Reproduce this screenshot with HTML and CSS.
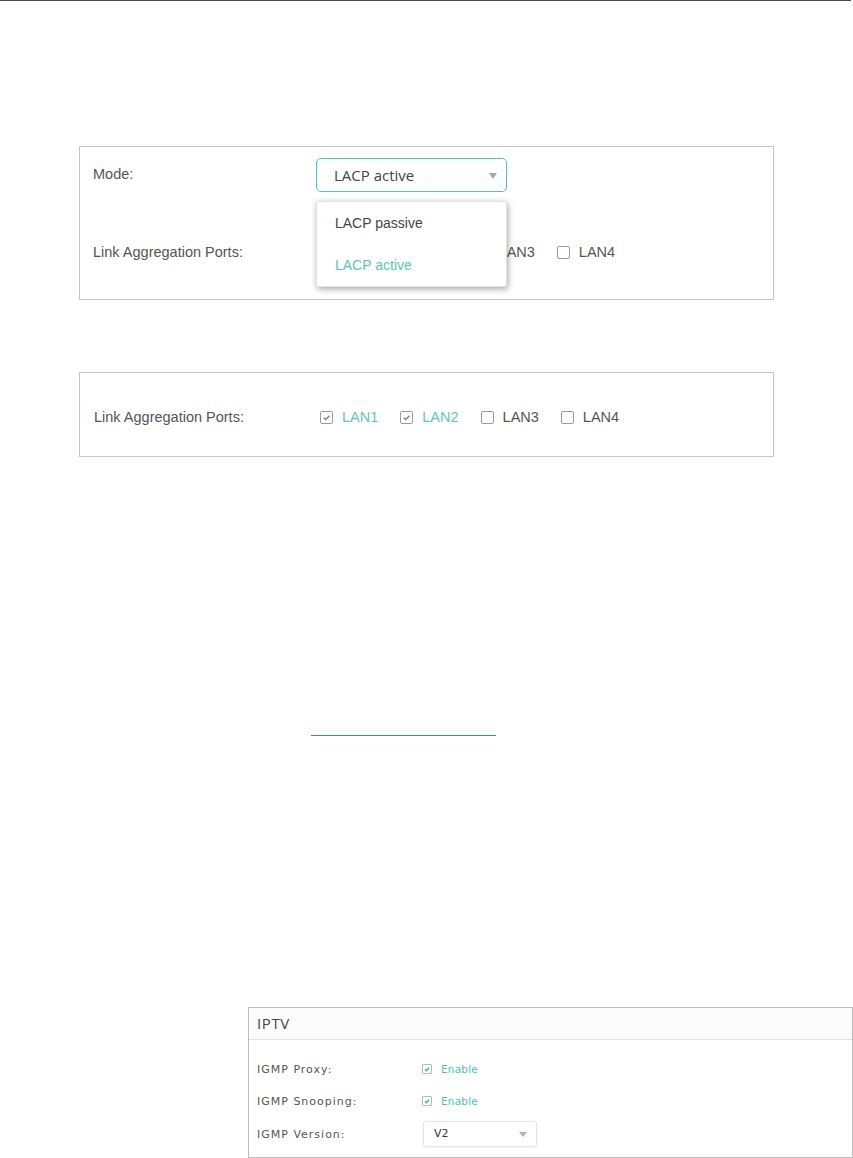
FILE: index.html
```html
<!DOCTYPE html>
<html lang="en">
<head>
    <meta charset="UTF-8">
    <title>Link Aggregation and IPTV</title>
    <link rel="stylesheet" href="styles.css">
</head>
<body>
    <div class="page-rule"></div>

    <!-- Mode select, opened -->
    <section class="shot shot-mode">
        <div class="row row-select">
            <span class="label">Mode:</span>
            <div class="select-wrap">
                <div class="select open">LACP active<span class="caret"></span></div>
                <ul class="menu">
                    <li>LACP passive</li>
                    <li class="selected">LACP active</li>
                </ul>
            </div>
        </div>
        <div class="row">
            <span class="label">Link Aggregation Ports:</span>
            <div class="ports">
                <label class="port covered"><span class="box"></span>LAN1</label>
                <label class="port covered"><span class="box"></span>LAN2</label>
                <label class="port"><span class="box covered"></span>LAN3</label>
                <label class="port"><span class="box"></span>LAN4</label>
            </div>
        </div>
    </section>

    <!-- Ports chosen -->
    <section class="shot shot-ports">
        <div class="row">
            <span class="label">Link Aggregation Ports:</span>
            <div class="ports">
                <label class="port checked"><span class="box"><svg viewBox="0 0 12 12"><path d="M3 6.2l2.1 2.1L9.2 4"/></svg></span>LAN1</label>
                <label class="port checked"><span class="box"><svg viewBox="0 0 12 12"><path d="M3 6.2l2.1 2.1L9.2 4"/></svg></span>LAN2</label>
                <label class="port"><span class="box"></span>LAN3</label>
                <label class="port"><span class="box"></span>LAN4</label>
            </div>
        </div>
    </section>

    <div class="link-rule"></div>

    <!-- IPTV settings -->
    <section class="iptv">
        <div class="iptv-head">IPTV</div>
        <div class="iptv-body">
            <div class="iptv-row">
                <span class="iptv-label">IGMP Proxy:</span>
                <span class="enable"><span class="mini-box"><svg viewBox="0 0 10 10"><path d="M2.5 5.2l1.8 1.8L7.6 3.4"/></svg></span>Enable</span>
            </div>
            <div class="iptv-row">
                <span class="iptv-label">IGMP Snooping:</span>
                <span class="enable"><span class="mini-box"><svg viewBox="0 0 10 10"><path d="M2.5 5.2l1.8 1.8L7.6 3.4"/></svg></span>Enable</span>
            </div>
            <div class="iptv-row iptv-row-select">
                <span class="iptv-label">IGMP Version:</span>
                <div class="mini-select">V2<span class="mini-caret"></span></div>
            </div>
        </div>
    </section>
</body>
</html>
```

FILE: styles.css
```css
* {
    box-sizing: border-box;
}

body {
    margin: 0;
    background-color: #fff;
    font-family: "Liberation Sans", Arial, sans-serif;
    color: #555;
}

.page-rule {
    width: 851px;
    height: 1px;
    background-color: #4a4a4a;
}

/* screenshot panels */
.shot {
    margin-left: 79px;
    width: 695px;
    border: 1px solid #c6c6c6;
    background-color: #fff;
}

.shot-mode {
    margin-top: 145px;
    height: 154px;
    padding: 11px 0 0 13px;
}

.shot-ports {
    margin-top: 72px;
    height: 85px;
    padding: 34px 0 0 14px;
}

.row {
    display: grid;
    grid-template-columns: 223px 1fr;
    align-items: center;
    height: 20px;
}

.shot-ports .row {
    grid-template-columns: 226px 1fr;
}

.row-select {
    height: 34px;
    margin-bottom: 50px;
    align-items: start;
}

.row-select .label {
    margin-top: 8px;
}

.label {
    font-size: 14.5px;
    color: #555;
    white-space: nowrap;
}

.select-wrap {
    position: relative;
    width: 191px;
}

.select {
    position: relative;
    height: 34px;
    border: 1px solid #56c4af;
    border-radius: 5px;
    padding-left: 17px;
    font-family: "Open Sans", sans-serif;
    font-size: 15px;
    line-height: 32px;
    color: #444;
    background-color: #fff;
}

.caret {
    position: absolute;
    right: 9px;
    top: 14px;
    width: 0;
    height: 0;
    border-left: 4.5px solid transparent;
    border-right: 4.5px solid transparent;
    border-top: 6px solid #a8a8a8;
}

.menu {
    position: absolute;
    top: 43px;
    left: 0;
    width: 191px;
    margin: 0;
    padding: 0;
    list-style: none;
    background-color: #fff;
    border: 1px solid #e2e2e2;
    border-radius: 2px;
    box-shadow: 1px 2px 6px rgba(0, 0, 0, 0.35);
    z-index: 2;
}

.menu li {
    height: 42px;
    line-height: 42px;
    padding-left: 18px;
    font-size: 14px;
    color: #444;
}

.menu li.selected {
    color: #5cc6b4;
}

.ports {
    display: flex;
    gap: 22px;
}

.port {
    display: flex;
    align-items: center;
    gap: 9px;
    font-size: 14.5px;
    color: #555;
}

/* hidden under the open menu */
.covered {
    visibility: hidden;
}

.port.checked {
    color: #63c7b6;
}

.box {
    display: flex;
    align-items: center;
    justify-content: center;
    width: 13px;
    height: 13px;
    border: 1px solid #9a9a9a;
    border-radius: 2px;
    background-color: #fff;
}

.box svg {
    width: 11px;
    height: 11px;
    fill: none;
    stroke: #5a8f86;
    stroke-width: 1.5;
}

.link-rule {
    margin: 278px 0 0 311px;
    width: 185px;
    height: 1px;
    background-color: #3c8b95;
}

/* IPTV panel */
.iptv {
    margin: 271px 0 0 248px;
    width: 605px;
    height: 151px;
    border: 1px solid #bdbdbd;
    font-family: "DejaVu Sans", Verdana, sans-serif;
}

.iptv-head {
    height: 32px;
    padding-left: 8px;
    border-bottom: 1px solid #e2e2e2;
    background-color: #fbfbfb;
    font-family: "Open Sans", sans-serif;
    font-size: 15px;
    letter-spacing: 0.6px;
    line-height: 31px;
    color: #444;
}

.iptv-body {
    padding: 13px 0 0 8px;
}

.iptv-row {
    display: grid;
    grid-template-columns: 165px 1fr;
    align-items: center;
    height: 32px;
}

.iptv-row-select {
    height: 26px;
    margin-top: 4px;
}

.iptv-label {
    font-size: 11px;
    letter-spacing: 1px;
    color: #555;
    white-space: nowrap;
}

.enable {
    display: flex;
    align-items: center;
    gap: 9px;
    font-size: 10.5px;
    letter-spacing: 0.2px;
    color: #4fbfab;
}

.mini-box {
    display: flex;
    align-items: center;
    justify-content: center;
    width: 10px;
    height: 10px;
    border: 1px solid #b9b9b9;
    border-radius: 1px;
}

.mini-box svg {
    width: 8px;
    height: 8px;
    fill: none;
    stroke: #47b8a4;
    stroke-width: 1.8;
}

.mini-select {
    position: relative;
    width: 114px;
    height: 26px;
    margin-left: 1px;
    padding-left: 10px;
    border: 1px solid #e6e6e6;
    border-radius: 2px;
    box-shadow: 0 1px 2px rgba(0, 0, 0, 0.06);
    font-size: 11px;
    line-height: 24px;
    color: #333;
}

.mini-caret {
    position: absolute;
    right: 9px;
    top: 10px;
    width: 0;
    height: 0;
    border-left: 4px solid transparent;
    border-right: 4px solid transparent;
    border-top: 5px solid #b3b3b3;
}
```
